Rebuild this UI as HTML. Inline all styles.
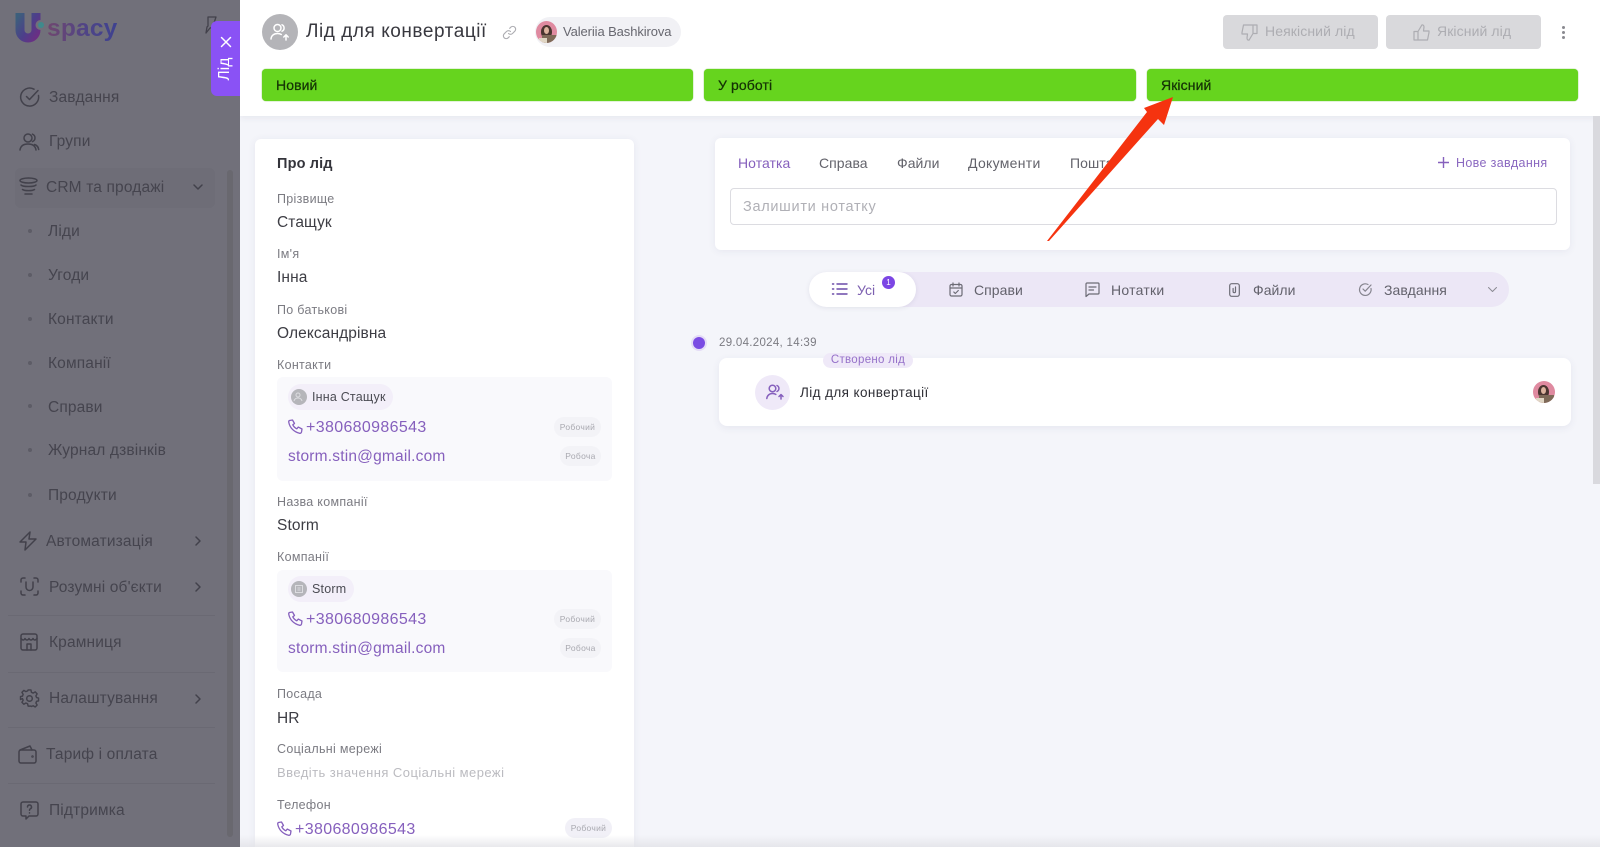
<!DOCTYPE html>
<html lang="uk">
<head>
<meta charset="utf-8">
<title>Лід для конвертації</title>
<style>
html,body{margin:0;padding:0;width:1600px;height:847px;overflow:hidden;background:#f4f5fa}
body{position:relative;font-family:"Liberation Sans","DejaVu Sans",sans-serif;color:#33333b}
.a{position:absolute}
.t{position:absolute;white-space:nowrap;line-height:20px;height:20px}
svg{position:absolute;overflow:visible;fill:none}
#side{position:absolute;left:0;top:0;width:240px;height:847px;background:#71707a;overflow:hidden}
#side .t{color:#45444e;font-size:15.5px;letter-spacing:.15px;margin-top:1px}
#side svg{stroke:#42414b;stroke-width:1.5;stroke-linecap:round;stroke-linejoin:round}
.sep{position:absolute;left:8px;width:207px;height:1px;background:#6a6973}
.dot{position:absolute;left:28px;width:4px;height:4px;border-radius:50%;background:#5d5c66}
.g{position:absolute;top:69px;height:32px;background:#66d41e;border-radius:4px;box-shadow:0 0 1px #4fa817}
.g span{position:absolute;left:14px;top:6px;line-height:20px;font-size:14px;letter-spacing:.1px;color:#143205;-webkit-text-stroke:.25px #143205;white-space:nowrap}
.lb{font-size:12.5px;color:#7b7b82;letter-spacing:.3px}
.val{font-size:15.5px;color:#3d3d44;letter-spacing:.1px;margin-top:1px}
.lnk{font-size:16px;color:#8660bd;letter-spacing:.35px;margin-top:2px}
.eml{font-size:15.5px;letter-spacing:.2px;margin-top:1px}
.box{position:absolute;left:277px;width:335px;background:#f9f9fc;border-radius:6px}
.chip{position:absolute;background:#f3eff9;border-radius:13px;height:26px}
.tag{position:absolute;height:20px;border-radius:10px;background:#f3f3f7;font-size:8.5px;line-height:20px;text-align:center;color:#a9a9b0;letter-spacing:.3px}
.tab{font-size:14px;color:#63636b;letter-spacing:.05px}
.pt{font-size:14px;color:#63626c;letter-spacing:.05px}
.ic{stroke:#6c6b75;stroke-width:1.2;stroke-linecap:round;stroke-linejoin:round}
.pur{stroke:#8660bd;stroke-width:1.3;stroke-linecap:round;stroke-linejoin:round}
.av{position:absolute;border-radius:50%;overflow:hidden;background:#df8aa0}
.av i{position:absolute;display:block}
</style>
</head>
<body>

<!-- Main header -->
<div class="a" style="left:240px;top:0;width:1360px;height:116px;background:#fff;box-shadow:0 2px 6px rgba(60,60,90,.07)"></div>

<!-- Sidebar -->
<div id="side">
  <svg style="left:0;top:0" width="240" height="847" viewBox="0 0 240 847">
    <defs>
      <linearGradient id="lg" x1="0" y1="0" x2="1" y2="1"><stop offset="0" stop-color="#3d5f7c"/><stop offset=".55" stop-color="#4c3f8a"/><stop offset="1" stop-color="#6b2f84"/></linearGradient>
    </defs>
    <path d="M20 13v17a8 8 0 0 0 16 0V13" style="stroke:url(#lg);stroke-width:9;stroke-linecap:butt;stroke-linejoin:miter"/>
    <circle cx="40.500" cy="25" r="5" style="fill:#71707a;stroke:none"/>
    <circle cx="41" cy="25" r="3" style="fill:#3f8a8c;stroke:none"/>
  </svg>
  <div class="t" style="left:47px;top:17px;font-size:24.500px;font-weight:700;letter-spacing:.2px;line-height:24px;height:26px;margin-top:0;background:linear-gradient(90deg,#70466f,#4d4488 60%,#3e4290);-webkit-background-clip:text;background-clip:text;color:transparent">spacy</div>
  <svg style="left:202px;top:16px;stroke-width:1.3" width="16" height="18" viewBox="0 0 16 18"><path d="M6 1h8l-3 9 1 1-4 1-4 5 1-6 1-1z"/></svg>

  <svg style="left:20px;top:87px" width="20" height="20" viewBox="0 0 20 20"><path d="M18.500 8.500A9 9 0 1 1 14 2.200"/><path d="M6.500 9.500l3 3 8.500-9"/></svg>
  <div class="t" style="left:49px;top:87px">Завдання</div>

  <svg style="left:19px;top:132px" width="21" height="19" viewBox="0 0 21 19"><circle cx="9" cy="6" r="4"/><path d="M13.500 2.200a4 4 0 0 1 0 7.400M1 18c.6-4 3.600-6 8-6s7.400 2 8 6M15.500 12.500c2.300.7 3.800 2.600 4.200 5"/></svg>
  <div class="t" style="left:49px;top:131px">Групи</div>

  <div class="a" style="left:15px;top:168px;width:200px;height:40px;background:rgba(90,88,100,.12);border-radius:6px"></div>
  <svg style="left:19px;top:177px" width="19" height="20" viewBox="0 0 19 20"><ellipse cx="9.500" cy="3.500" rx="8.500" ry="2.500"/><path d="M2 8c1.500 2 13.500 2 15 0M3.500 12.500c2 1.500 10 1.500 12 0M6 17h7"/></svg>
  <div class="t" style="left:46px;top:177px">CRM та продажі</div>
  <svg style="left:193px;top:184px" width="10" height="6" viewBox="0 0 10 6"><path d="M1 1l4 4 4-4"/></svg>

  <div class="dot" style="top:229px"></div><div class="t" style="left:48px;top:221px">Ліди</div>
  <div class="dot" style="top:273px"></div><div class="t" style="left:48px;top:265px">Угоди</div>
  <div class="dot" style="top:317px"></div><div class="t" style="left:48px;top:309px">Контакти</div>
  <div class="dot" style="top:361px"></div><div class="t" style="left:48px;top:353px">Компанії</div>
  <div class="dot" style="top:404px"></div><div class="t" style="left:48px;top:397px">Справи</div>
  <div class="dot" style="top:448px"></div><div class="t" style="left:48px;top:440px">Журнал дзвінків</div>
  <div class="dot" style="top:493px"></div><div class="t" style="left:48px;top:485px">Продукти</div>

  <svg style="left:19px;top:531px" width="18" height="20" viewBox="0 0 18 20"><path d="M11 1L1 11h6l-1 8 11-11h-7z"/></svg>
  <div class="t" style="left:46px;top:531px">Автоматизація</div>
  <svg style="left:195px;top:536px" width="6" height="10" viewBox="0 0 6 10"><path d="M1 1l4 4-4 4"/></svg>

  <svg style="left:20px;top:577px" width="19" height="19" viewBox="0 0 19 19"><path d="M1 5V3a2 2 0 0 1 2-2h2M14 1h2a2 2 0 0 1 2 2v2M18 14v2a2 2 0 0 1-2 2h-2M5 18H3a2 2 0 0 1-2-2v-2M6 5v5a3.500 3.500 0 0 0 7 0V5"/></svg>
  <div class="t" style="left:49px;top:577px">Розумні об'єкти</div>
  <svg style="left:195px;top:582px" width="6" height="10" viewBox="0 0 6 10"><path d="M1 1l4 4-4 4"/></svg>

  <div class="sep" style="top:615px"></div>
  <svg style="left:20px;top:633px" width="18" height="18" viewBox="0 0 18 18"><rect x="1" y="1" width="16" height="16" rx="2"/><path d="M1 5.500c1.500 2 3 2 4 0 1 2 3 2 4 0 1 2 3 2 4 0 1 2 2.500 2 4 0M7 17v-6h4v6"/></svg>
  <div class="t" style="left:49px;top:632px">Крамниця</div>

  <div class="sep" style="top:672px"></div>
  <svg style="left:20px;top:689px" width="19" height="19" viewBox="0 0 19 19"><circle cx="9.500" cy="9.500" r="2.800"/><path d="M8 1h3l.5 2.500 1.800.8 2.200-1.300 2 2.100-1.300 2.100.7 1.800 2.100.5v3l-2.100.5-.7 1.800 1.300 2.100-2 2-2.200-1.300-1.800.8L11 18H8l-.5-2.500-1.800-.8-2.200 1.300-2-2 1.300-2.100-.7-1.800L0 11V8l2.100-.5.7-1.800L1.500 3.600l2-2.100 2.200 1.300 1.800-.8z" transform="translate(.5 0) scale(.95)"/></svg>
  <div class="t" style="left:49px;top:688px">Налаштування</div>
  <svg style="left:195px;top:694px" width="6" height="10" viewBox="0 0 6 10"><path d="M1 1l4 4-4 4"/></svg>

  <div class="sep" style="top:727px"></div>
  <svg style="left:18px;top:745px" width="19" height="19" viewBox="0 0 19 19"><rect x="1" y="5" width="17" height="13" rx="2"/><path d="M2 5l10-4 2 4"/><circle cx="14.500" cy="11.500" r=".5"/></svg>
  <div class="t" style="left:46px;top:744px">Тариф і оплата</div>

  <div class="sep" style="top:783px"></div>
  <svg style="left:20px;top:801px" width="19" height="19" viewBox="0 0 19 19"><path d="M3 1h13a2 2 0 0 1 2 2v10a2 2 0 0 1-2 2H9l-3 3v-3H3a2 2 0 0 1-2-2V3a2 2 0 0 1 2-2z"/><path d="M7.500 6a2 2 0 1 1 2.800 1.800c-.6.300-.8.700-.8 1.400M9.500 11.800v.2"/></svg>
  <div class="t" style="left:49px;top:800px">Підтримка</div>

  <div class="a" style="left:227px;top:170px;width:6px;height:667px;background:#69686f;border-radius:3px"></div>
</div>

<!-- Purple close tab -->
<div class="a" style="left:211px;top:21px;width:29px;height:75px;background:#8a52f5;border-radius:6px 0 0 6px"></div>
<svg style="left:220px;top:36px" width="12" height="12" viewBox="0 0 12 12"><path d="M1.500 1.500l9 9M10.500 1.500l-9 9" stroke="#fff" stroke-width="1.500" stroke-linecap="round"/></svg>
<div class="t" style="left:209px;top:59px;width:32px;text-align:center;color:#fff;font-size:15.500px;letter-spacing:.1px;transform:rotate(-90deg)">Лід</div>

<!-- Header content -->
<div class="a" style="left:262px;top:14px;width:36px;height:36px;border-radius:50%;background:#b4b4b8"></div>
<svg style="left:270px;top:23px" width="21" height="18" viewBox="0 0 21 18" stroke="#fff" stroke-width="1.500" stroke-linecap="round" stroke-linejoin="round"><circle cx="7.500" cy="5" r="3.500"/><path d="M12 1.800a3.500 3.500 0 0 1 0 6.400M1 16c.3-3.500 3-5.500 6.500-5.500 1.500 0 2.800.3 3.800 1M16 17v-5M13.800 14l2.200-2.200 2.200 2.200"/></svg>
<div class="t" style="left:306px;top:21px;font-size:19px;line-height:22px;height:22px;letter-spacing:.55px;color:#38383f">Лід для конвертації</div>
<svg style="left:502px;top:25px" width="15" height="15" viewBox="0 0 15 15" stroke="#adadb2" stroke-width="1.100" stroke-linecap="round"><path d="M6.500 8.500a2.800 2.800 0 0 0 4 0l2.300-2.300a2.800 2.800 0 0 0-4-4L7.700 3.300M8.500 6.500a2.800 2.800 0 0 0-4 0L2.200 8.800a2.800 2.800 0 0 0 4 4l1.100-1.100"/></svg>
<div class="a" style="left:535px;top:17px;width:146px;height:30px;border-radius:15px;background:#f1f1f5"></div>
<div class="av" style="left:536px;top:21px;width:21px;height:22px"><i style="left:5px;top:4px;width:11px;height:14px;border-radius:50%;background:#4a3530"></i><i style="left:8px;top:6px;width:5px;height:7px;border-radius:50%;background:#dcb39e"></i><i style="left:6px;top:14px;width:15px;height:8px;background:#7e6a58"></i><i style="left:3px;top:17px;width:8px;height:5px;background:#e0d6c4"></i></div>
<div class="t" style="left:563px;top:22px;font-size:13px;letter-spacing:-.1px;color:#67676f">Valeriia Bashkirova</div>

<div class="a" style="left:1223px;top:15px;width:155px;height:34px;border-radius:4px;background:#d9d9dc"></div>
<svg style="left:1241px;top:24px" width="17" height="17" viewBox="0 0 17 17" stroke="#adadb2" stroke-width="1.200" stroke-linejoin="round" stroke-linecap="round"><path d="M12 1H2.500L1 8.500V10h5.500L6 14c0 1.500 1 2.200 2 2.200L12 9.500V1zM12 1h4v8.500h-4"/></svg>
<div class="t" style="left:1265px;top:21px;font-size:14px;letter-spacing:.1px;color:#adadb2">Неякісний лід</div>
<div class="a" style="left:1386px;top:15px;width:155px;height:34px;border-radius:4px;background:#d9d9dc"></div>
<svg style="left:1413px;top:24px" width="17" height="17" viewBox="0 0 17 17" stroke="#adadb2" stroke-width="1.200" stroke-linejoin="round" stroke-linecap="round"><path d="M5 16h9.500L16 8.500V7h-5.500L11 3c0-1.500-1-2.200-2-2.200L5 7.500V16zM5 16H1V7.500h4"/></svg>
<div class="t" style="left:1437px;top:21px;font-size:14px;letter-spacing:.1px;color:#adadb2">Якісний лід</div>
<div class="a" style="left:1561.500px;top:26px;width:3px;height:3px;border-radius:50%;background:#8a8a90;box-shadow:0 5px 0 #8a8a90,0 10px 0 #8a8a90"></div>

<!-- Stage bars -->
<div class="g" style="left:262px;width:431px"><span>Новий</span></div>
<div class="g" style="left:704px;width:432px"><span>У роботі</span></div>
<div class="g" style="left:1147px;width:431px"><span>Якісний</span></div>

<!-- Scrollbar -->
<div class="a" style="left:1593px;top:116px;width:7px;height:368px;background:#d9d9de"></div>

<!-- Left card -->
<div class="a" style="left:255px;top:139px;width:379px;height:720px;background:#fff;border-radius:6px;box-shadow:0 1px 8px rgba(70,70,110,.08)"></div>
<div class="t" style="left:277px;top:154px;font-size:14.500px;font-weight:700;letter-spacing:.15px;color:#34343b">Про лід</div>
<div class="t lb" style="left:277px;top:189px">Прізвище</div>
<div class="t val" style="left:277px;top:212px">Стащук</div>
<div class="t lb" style="left:277px;top:244px">Ім'я</div>
<div class="t val" style="left:277px;top:267px">Інна</div>
<div class="t lb" style="left:277px;top:300px">По батькові</div>
<div class="t val" style="left:277px;top:323px">Олександрівна</div>
<div class="t lb" style="left:277px;top:355px">Контакти</div>

<div class="box" style="top:377px;height:104px"></div>
<div class="chip" style="left:288px;top:384px;width:105px"></div>
<div class="a" style="left:291px;top:389px;width:16px;height:16px;border-radius:50%;background:#b5b5ba"></div>
<svg style="left:294px;top:392px" width="10" height="10" viewBox="0 0 10 10" stroke="#dcdce0" stroke-width="1"><circle cx="4" cy="3" r="2"/><path d="M0 9c.5-2 2-3 4-3s3.500 1 4 3"/></svg>
<div class="t" style="left:312px;top:387px;font-size:12.500px;letter-spacing:.2px;color:#4b4b53">Інна Стащук</div>
<svg class="pur" style="left:288px;top:419px" width="15" height="15" viewBox="0 0 15 15"><path d="M1.500 1.500L4.500 1l2 3.500-1.700 1.300c.8 1.700 2.300 3.200 4 4l1.500-1.700L14 10l-.5 3c-.2 1-1 1.500-2 1.200C6 13 2 9 .8 3.500c-.2-.9 0-1.700.7-2z"/></svg>
<div class="t lnk" style="left:306px;top:416px">+380680986543</div>
<div class="tag" style="left:554px;top:417px;width:47px">Робочий</div>
<div class="t lnk eml" style="left:288px;top:446px">storm.stin@gmail.com</div>
<div class="tag" style="left:560px;top:446px;width:41px">Робоча</div>

<div class="t lb" style="left:277px;top:492px">Назва компанії</div>
<div class="t val" style="left:277px;top:515px">Storm</div>
<div class="t lb" style="left:277px;top:547px">Компанії</div>

<div class="box" style="top:570px;height:102px"></div>
<div class="chip" style="left:288px;top:576px;width:66px"></div>
<div class="a" style="left:291px;top:581px;width:16px;height:16px;border-radius:50%;background:#b5b5ba"></div>
<svg style="left:295px;top:585px" width="8" height="8" viewBox="0 0 8 8" stroke="#dcdce0" stroke-width="1"><rect x=".5" y=".5" width="7" height="7"/><path d="M2.500 3h3M2.500 5h3"/></svg>
<div class="t" style="left:312px;top:579px;font-size:12.500px;letter-spacing:.2px;color:#4b4b53">Storm</div>
<svg class="pur" style="left:288px;top:611px" width="15" height="15" viewBox="0 0 15 15"><path d="M1.500 1.500L4.500 1l2 3.500-1.700 1.300c.8 1.700 2.300 3.200 4 4l1.500-1.700L14 10l-.5 3c-.2 1-1 1.500-2 1.200C6 13 2 9 .8 3.500c-.2-.9 0-1.700.7-2z"/></svg>
<div class="t lnk" style="left:306px;top:608px">+380680986543</div>
<div class="tag" style="left:554px;top:609px;width:47px">Робочий</div>
<div class="t lnk eml" style="left:288px;top:638px">storm.stin@gmail.com</div>
<div class="tag" style="left:560px;top:638px;width:41px">Робоча</div>

<div class="t lb" style="left:277px;top:684px">Посада</div>
<div class="t val" style="left:277px;top:708px">HR</div>
<div class="t lb" style="left:277px;top:739px">Соціальні мережі</div>
<div class="t" style="left:277px;top:763px;font-size:13px;letter-spacing:.45px;color:#bbbbc0">Введіть значення Соціальні мережі</div>
<div class="t lb" style="left:277px;top:795px">Телефон</div>
<svg class="pur" style="left:277px;top:821px" width="15" height="15" viewBox="0 0 15 15"><path d="M1.500 1.500L4.500 1l2 3.500-1.700 1.300c.8 1.700 2.300 3.200 4 4l1.500-1.700L14 10l-.5 3c-.2 1-1 1.500-2 1.200C6 13 2 9 .8 3.500c-.2-.9 0-1.700.7-2z"/></svg>
<div class="t lnk" style="left:295px;top:818px">+380680986543</div>
<div class="tag" style="left:565px;top:818px;width:47px;background:#f1f0f7">Робочий</div>

<!-- Note card -->
<div class="a" style="left:715px;top:138px;width:855px;height:112px;background:#fff;border-radius:6px;box-shadow:0 1px 8px rgba(70,70,110,.08)"></div>
<div class="t tab" style="left:738px;top:153px;color:#8660bd">Нотатка</div>
<div class="t tab" style="left:819px;top:153px">Справа</div>
<div class="t tab" style="left:897px;top:153px">Файли</div>
<div class="t tab" style="left:968px;top:153px;letter-spacing:.3px">Документи</div>
<div class="t tab" style="left:1070px;top:153px">Пошта</div>
<svg style="left:1438px;top:157px" width="11" height="11" viewBox="0 0 11 11" stroke="#8660bd" stroke-width="1.400"><path d="M5.500 0v11M0 5.500h11"/></svg>
<div class="t" style="left:1456px;top:153px;font-size:12.500px;letter-spacing:.35px;color:#8a68c0">Нове завдання</div>
<div class="a" style="left:730px;top:188px;width:825px;height:35px;border:1px solid #dcdce1;border-radius:4px;background:#fff"></div>
<div class="t" style="left:743px;top:197px;font-size:14.500px;letter-spacing:.7px;color:#b0b0b6">Залишити нотатку</div>

<!-- Pill tabs -->
<div class="a" style="left:809px;top:272px;width:700px;height:35px;border-radius:18px;background:#ece7f6"></div>
<div class="a" style="left:809px;top:272px;width:107px;height:35px;border-radius:18px;background:#fff;box-shadow:0 1px 5px rgba(70,70,110,.1)"></div>
<svg style="left:832px;top:283px" width="15" height="12" viewBox="0 0 15 12" stroke="#6a4aa8" stroke-width="1.400" stroke-linecap="round"><path d="M5 1h10M5 6h10M5 11h10M.5 1h1.200M.5 6h1.200M.5 11h1.200"/></svg>
<div class="t pt" style="left:857px;top:280px;color:#7c5fb0">Усі</div>
<div class="a" style="left:882px;top:276px;width:13px;height:13px;border-radius:50%;background:#7c46e4;color:#fff;font-size:8px;line-height:13px;text-align:center">1</div>
<svg class="ic" style="left:949px;top:282px" width="14" height="15" viewBox="0 0 14 15"><rect x="1" y="2.500" width="12" height="11.500" rx="1.500"/><path d="M1 6h12M4 1v3M10 1v3M4.800 10l1.500 1.500 3-3"/></svg>
<div class="t pt" style="left:974px;top:280px">Справи</div>
<svg class="ic" style="left:1085px;top:282px" width="15" height="15" viewBox="0 0 15 15"><path d="M2 1h11a1 1 0 0 1 1 1v9a1 1 0 0 1-1 1H4l-3 2.500V2a1 1 0 0 1 1-1zM4 5h7M4 8h4.500"/></svg>
<div class="t pt" style="left:1111px;top:280px;letter-spacing:.25px">Нотатки</div>
<svg class="ic" style="left:1229px;top:283px" width="11" height="14" viewBox="0 0 11 14"><rect x=".7" y=".7" width="9.600" height="12.600" rx="2"/><path d="M6.500 4v4.500a1.200 1.200 0 0 1-2.400 0V5.500"/></svg>
<div class="t pt" style="left:1253px;top:280px">Файли</div>
<svg class="ic" style="left:1359px;top:283px;stroke:#85848e" width="13" height="13" viewBox="0 0 13 13"><path d="M12 5.500A5.800 5.800 0 1 1 9 1.500"/><path d="M4 6l2.200 2.200L12 2"/></svg>
<div class="t pt" style="left:1384px;top:280px">Завдання</div>
<svg style="left:1488px;top:287px" width="9" height="5" viewBox="0 0 9 5" stroke="#8a8992" stroke-width="1" stroke-linecap="round" stroke-linejoin="round"><path d="M.5.500l4 4 4-4"/></svg>

<!-- Timeline -->
<div class="a" style="left:693px;top:337px;width:12px;height:12px;border-radius:50%;background:#7a4be3;box-shadow:0 0 0 2px #e4dcf6"></div>
<div class="t" style="left:719px;top:333px;font-size:11.500px;letter-spacing:.3px;color:#7b7b82">29.04.2024, 14:39</div>
<div class="a" style="left:719px;top:358px;width:852px;height:68px;background:#fff;border-radius:8px;box-shadow:0 2px 8px rgba(70,70,110,.08)"></div>
<div class="a" style="left:823px;top:353px;width:90px;height:15px;background:#efe9f8;border-radius:8px;font-size:11.500px;line-height:15px;text-align:center;letter-spacing:.3px;color:#9570c9;white-space:nowrap">Створено лід</div>
<div class="a" style="left:755px;top:375px;width:35px;height:35px;border-radius:50%;background:#efe9f8"></div>
<svg style="left:766px;top:384px" width="19" height="16" viewBox="0 0 19 16" stroke="#8660bd" stroke-width="1.500" stroke-linecap="round" stroke-linejoin="round"><circle cx="6.500" cy="4.500" r="3.300"/><path d="M11 1.500a3.300 3.300 0 0 1 0 6M.8 14.500c.3-3 2.700-5 5.700-5 1.300 0 2.400.3 3.300.9M15 15v-4.500M13 12.500l2-2 2 2"/></svg>
<div class="t" style="left:800px;top:383px;font-size:13.500px;letter-spacing:.4px;color:#2e2e35">Лід для конвертації</div>
<div class="av" style="left:1533px;top:381px;width:22px;height:22px"><i style="left:5px;top:4px;width:11px;height:14px;border-radius:50%;background:#4a3530"></i><i style="left:8px;top:6px;width:5px;height:7px;border-radius:50%;background:#dcb39e"></i><i style="left:6px;top:14px;width:15px;height:8px;background:#7e6a58"></i><i style="left:3px;top:17px;width:8px;height:5px;background:#e0d6c4"></i></div>

<!-- Bottom fade -->
<div class="a" style="left:240px;top:835px;width:1360px;height:12px;background:linear-gradient(to bottom,rgba(235,235,240,0),rgba(225,225,230,.75))"></div>

<!-- Red annotation arrow -->
<svg style="left:0;top:0" width="1600" height="847" viewBox="0 0 1600 847"><polygon points="1173,97 1144,108 1147,112 1047,241 1049,241 1158,119 1164,125" fill="#f5330f"/></svg>

</body>
</html>
